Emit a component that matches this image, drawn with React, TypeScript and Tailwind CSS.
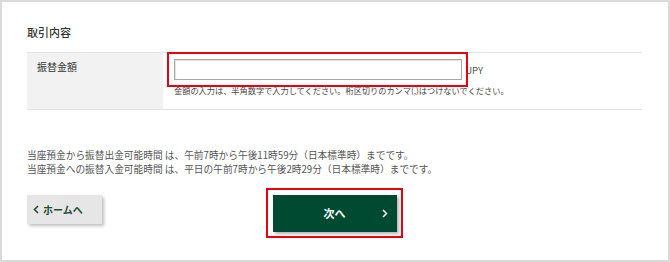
export default function App() {
  return (
    <div className="w-[670px] h-[262px] border-2 border-[#dadada] bg-white pl-[25px] pr-[26px] pt-[22px] font-['Noto_Sans_CJK_JP',sans-serif] text-[#333]">
      <h2 className="text-[11px] leading-[16px] font-medium">取引内容</h2>

      <div className="mt-[12px] flex h-[58px] border-y border-[#e2e2e2]">
        <div className="w-[136px] shrink-0 bg-[#f2f2f2] pl-[10px] pt-[7px] text-[10px] leading-[14px]">
          振替金額
        </div>
        <div className="pl-[11px] pt-[6px]">
          <div className="flex items-center">
            <div className="relative">
              <input
                type="text"
                className="block w-[288px] h-[21px] border border-[#a8a8a8] bg-white shadow-[inset_1px_1px_1px_rgba(0,0,0,0.12)] outline-none"
              />
              <div className="pointer-events-none absolute -left-[7px] -right-[6px] -top-[7px] -bottom-[7px] border-2 border-[#e60012]" />
            </div>
            <span className="ml-[5px] text-[9.5px] leading-[12px] text-[#555]">JPY</span>
          </div>
          <p className="mt-[4px] text-[8.2px] leading-[12px] text-[#444] whitespace-nowrap">
            金額の入力は、半角数字で入力してください。桁区切りのカンマ(,)はつけないでください。
          </p>
        </div>
      </div>

      <div className="mt-[38px] text-[9.7px] leading-[14px] text-[#555] whitespace-nowrap">
        <p>当座預金から振替出金可能時間 は、午前7時から午後11時59分（日本標準時）までです。</p>
        <p>当座預金への振替入金可能時間 は、平日の午前7時から午後2時29分（日本標準時）までです。</p>
      </div>

      <div className="mt-[19px] grid grid-cols-[1fr_auto_1fr] items-start">
        <div>
          <button className="flex h-[29px] w-[75px] items-center gap-[4px] bg-[#e6e6e6] pl-[6px] text-[10px] font-bold text-[#1c4e36] shadow-[2px_2px_3px_rgba(0,0,0,0.25)]">
            <svg width="6" height="9" viewBox="0 0 6 9" fill="none">
              <polyline points="5,1 1.5,4.5 5,8" stroke="#1c4e36" strokeWidth="1.6" />
            </svg>
            ホームへ
          </button>
        </div>
        <div className="relative">
          <button className="relative flex h-[37px] w-[124px] items-center justify-center bg-[#004a31] text-[11px] font-bold text-white shadow-[2px_2px_3px_rgba(0,0,0,0.3)]">
            次へ
            <svg className="absolute right-[9px] top-[14px]" width="6" height="9" viewBox="0 0 6 9" fill="none">
              <polyline points="1,1 4.5,4.5 1,8" stroke="#ffffff" strokeWidth="1.5" />
            </svg>
          </button>
          <div className="pointer-events-none absolute -left-[7px] -right-[6px] -top-[7px] -bottom-[6px] border-2 border-[#e60012]" />
        </div>
        <div />
      </div>
    </div>
  );
}
